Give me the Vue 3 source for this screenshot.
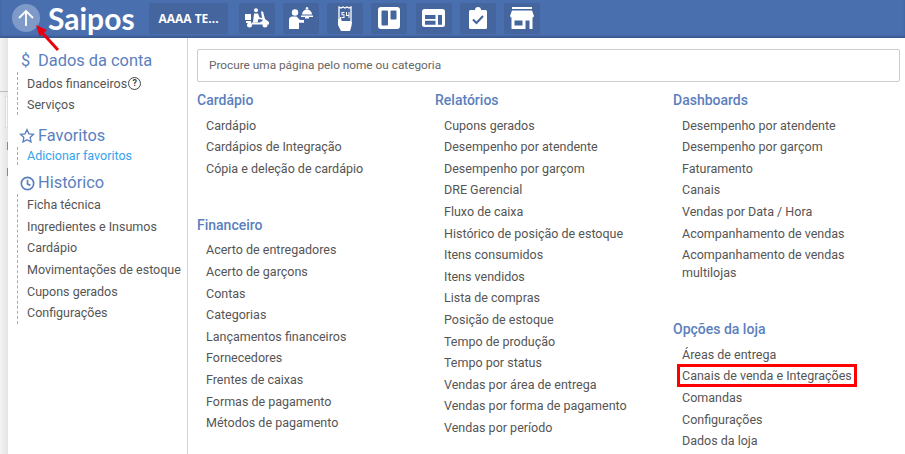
<script setup>
const columns = [
  [
    { title: 'Cardápio', items: ['Cardápio', 'Cardápios de Integração', 'Cópia e deleção de cardápio'] },
    { title: 'Financeiro', items: ['Acerto de entregadores', 'Acerto de garçons', 'Contas', 'Categorias', 'Lançamentos financeiros', 'Fornecedores', 'Frentes de caixas', 'Formas de pagamento', 'Métodos de pagamento'] },
  ],
  [
    { title: 'Relatórios', items: ['Cupons gerados', 'Desempenho por atendente', 'Desempenho por garçom', 'DRE Gerencial', 'Fluxo de caixa', 'Histórico de posição de estoque', 'Itens consumidos', 'Itens vendidos', 'Lista de compras', 'Posição de estoque', 'Tempo de produção', 'Tempo por status', 'Vendas por área de entrega', 'Vendas por forma de pagamento', 'Vendas por período'] },
  ],
  [
    { title: 'Dashboards', items: ['Desempenho por atendente', 'Desempenho por garçom', 'Faturamento', 'Canais', 'Vendas por Data / Hora', 'Acompanhamento de vendas', 'Acompanhamento de vendas multilojas'] },
    { title: 'Opções da loja', items: ['Áreas de entrega', 'Canais de venda e Integrações', 'Comandas', 'Configurações', 'Dados da loja'] },
  ],
]
const historico = ['Ficha técnica', 'Ingredientes e Insumos', 'Cardápio', 'Movimentações de estoque', 'Cupons gerados', 'Configurações']
</script>

<template>
  <div class="page">
    <header class="bar">
      <div class="up">
        <svg width="18" height="18" viewBox="0 0 18 18" fill="none" stroke="#fff" stroke-width="1.800"><path d="M9 17V2M2 9l7-7 7 7"/></svg>
      </div>
      <span class="logo">Saipos</span>
      <div class="store">AAAA TE...</div>
      <div class="tools">
        <div class="tool">
          <svg width="25" height="20" viewBox="0 0 25 20" fill="#fff"><circle cx="11" cy="2.300" r="2"/><path d="M9 5.500h4l1.500 4 2.500.5v1.500l-3.500-.5-1 3.500H8z"/><rect x="0" y="6" width="6" height="6"/><path d="M6.500 14.500h8l3-1.500-1.500-9.500h2L20 11l4 3v2.500H7z"/><rect x="1" y="13" width="5" height="2"/><circle cx="4.500" cy="17" r="2.500"/><circle cx="20" cy="17" r="2.500"/></svg>
        </div>
        <div class="tool">
          <svg width="25" height="24" viewBox="0 0 25 24" fill="#fff"><circle cx="6" cy="6.500" r="3.200"/><path d="M0 23v-9q0-3.500 3.500-3.500h4L11 14h4v2.800h-5V23z"/><path d="M13 8.500a5 5 0 0 1 10 0z"/><rect x="12" y="9.500" width="12" height="1.500"/><rect x="16" y="11" width="4" height="1.500"/><circle cx="18" cy="2.200" r="1.200"/></svg>
        </div>
        <div class="tool">
          <svg width="16" height="25" viewBox="0 0 16 25"><path d="M2 1l2 1 2-1 2 1 2-1 2 1 2-1v15H2z" fill="none" stroke="#fff" stroke-width="1.300"/><path d="M4.500 6h3v1H5.500v1.200h2V12h-3v-1h2V9.200h-2zM9 6h1v3h1.500V6h1v6h-1V10H9z" fill="#fff"/><path d="M1 13h2v-2h1l.5 4H13l2 1-.5 4-1.500 5H4l-3-6z" fill="#fff"/></svg>
        </div>
        <div class="tool">
          <svg width="22" height="22" viewBox="0 0 22 22"><rect width="22" height="22" rx="3" fill="#fff"/><rect x="3.500" y="3.500" width="6.500" height="15" rx="1" fill="#44659d"/><rect x="12.500" y="3.500" width="6" height="9" rx="1" fill="#44659d"/></svg>
        </div>
        <div class="tool">
          <svg width="23" height="18" viewBox="0 0 23 18"><rect width="23" height="18" rx="2.500" fill="#fff"/><path d="M3 6h10.500v4H3zM3 11.700h10.500v4H3zM16 6h4v9.700h-4z" fill="#44659d"/></svg>
        </div>
        <div class="tool">
          <svg width="18" height="22" viewBox="0 0 18 22"><path d="M1.500 3H6a3 3 0 0 1 6 0h4.500A1.500 1.500 0 0 1 18 4.500v16a1.500 1.500 0 0 1-1.500 1.500h-15A1.500 1.500 0 0 1 0 20.500v-16A1.500 1.500 0 0 1 1.500 3z" fill="#fff"/><path d="M4 12.500l3.500 3.500L14 9" fill="none" stroke="#44659d" stroke-width="2"/></svg>
        </div>
        <div class="tool">
          <svg width="24" height="22" viewBox="0 0 24 22" fill="#fff"><rect x="2" y="0" width="20" height="2"/><path d="M2 3.500h20L24 9a2.500 2.500 0 0 1-2.500 2h-19A2.500 2.500 0 0 1 0 9z"/><path fill-rule="evenodd" d="M1.500 11h21v11h-21zM4.500 13.500v5h8v-5zM15.500 13.500V22h4v-8.500z"/></svg>
        </div>
      </div>
    </header>
    <div class="body">
      <div class="behind">
        <div class="b-line"></div>
        <div class="b-card"></div>
        <div class="b-tick t1"></div>
        <div class="b-tick t2"></div>
      </div>
      <aside class="side">
        <h2 class="side-title"><span class="dollar">$</span>Dados da conta</h2>
        <ul class="side-list">
          <li class="first">Dados financeiros<span class="q">?</span></li>
          <li>Serviços</li>
        </ul>
        <h2 class="side-title second">
          <svg class="side-icon" width="16" height="16" viewBox="0 0 24 24" fill="none" stroke="#5b7fbd" stroke-width="2"><path d="M12 2.500l2.900 6.200 6.800.8-5 4.600 1.300 6.700L12 17.500l-6 3.300 1.300-6.700-5-4.600 6.800-.8z"/></svg>Favoritos
        </h2>
        <ul class="side-list">
          <li class="link">Adicionar favoritos</li>
        </ul>
        <h2 class="side-title third">
          <svg class="side-icon" width="15" height="15" viewBox="0 0 16 16" fill="none" stroke="#5b7fbd" stroke-width="1.800"><circle cx="8" cy="8" r="6.600"/><path d="M8 4v4.500l3 1.500"/></svg>Histórico
        </h2>
        <ul class="side-list">
          <li v-for="h in historico" :key="h">{{ h }}</li>
        </ul>
      </aside>
      <main class="main">
        <div class="search">Procure uma página pelo nome ou categoria</div>
        <div class="cols">
          <div v-for="(col, i) in columns" :key="i" class="col">
            <section v-for="g in col" :key="g.title" class="group">
              <h3>{{ g.title }}</h3>
              <ul>
                <li v-for="item in g.items" :key="item"><span :class="{ hl: item.startsWith('Canais de venda') }">{{ item }}</span></li>
              </ul>
            </section>
          </div>
        </div>
      </main>
    </div>
    <svg class="arrow" width="26" height="28" viewBox="0 0 26 28"><path d="M7 7.500L23 25" stroke="#e8000f" stroke-width="3"/><path d="M1 0l11 5-7.500 6.600z" fill="#e8000f"/></svg>
  </div>
</template>

<style scoped>
.page { position: relative; width: 905px; height: 454px; overflow: hidden; background: #fff; font-family: Roboto, "Liberation Sans", sans-serif; color: #555; }
ul { list-style: none; margin: 0; padding: 0; }
h2, h3 { margin: 0; font-weight: 400; }
.bar { height: 38px; background: #4a6fae; display: flex; align-items: center; padding: 0 0 2px 12px; box-sizing: border-box; box-shadow: inset 0 -2px 2px rgba(30,50,90,.35); position: relative; z-index: 1; }
.up { width: 28px; height: 28px; border-radius: 50%; background: #7e9ac8; display: flex; align-items: center; justify-content: center; }
.logo { color: #fff; font: 700 30px/34px Lato, sans-serif; margin-left: 8px; width: 101px; }
.store { width: 79px; height: 31px; background: #44659d; color: #fff; border-radius: 2px; font: 700 12px/31px "Open Sans", sans-serif; text-align: center; }
.tools { display: flex; gap: 8.170px; margin-left: 11px; }
.tool { width: 36px; height: 31px; background: #44659d; border-radius: 2px; display: flex; align-items: center; justify-content: center; }
.body { display: flex; height: 416px; }
.behind { width: 8px; flex: none; position: relative; background: linear-gradient(to right, #f4f4f4, #e4e4e4); }
.b-line { position: absolute; left: 0; top: 53px; width: 8px; height: 1px; background: #bbb; }
.b-card { position: absolute; left: 5px; top: 58px; width: 3px; height: 32px; background: #f8f8f8; border: 1px solid #ddd; box-sizing: border-box; }
.b-tick { position: absolute; left: 7px; width: 1px; height: 8px; background: #888; }
.t1 { top: 104px; }
.t2 { top: 130px; }
.side { width: 170px; background: #fff; border-right: 1px solid #d5d5d5; padding: 12px 0 0 9px; }
.side-title { font-size: 16.400px; line-height: 22px; color: #5b7fbd; display: flex; align-items: center; }
.second { margin-top: 10px; }
.third { margin-top: 7px; }
.dollar { width: 21px; padding-left: 4px; box-sizing: border-box; }
.side-icon { margin-right: 3px; margin-left: 2px; flex: none; }
.third .side-icon { margin-left: 3px; margin-right: 3px; }
.side-list { border-left: 1px dashed #aaa; padding-left: 9px; }
.side-list li { font-size: 12.500px; line-height: 21.600px; white-space: nowrap; display: flex; align-items: center; }
.side-list .first { padding-top: 1px; margin-bottom: -1px; }
.side-list .link { color: #35a3ee; line-height: 18px; }
.q { width: 11px; height: 11px; border: 1px solid #444; border-radius: 50%; font-size: 9px; line-height: 11px; text-align: center; margin-left: 1px; font-weight: 700; color: #444; }
.main { flex: 1; background: #fff; padding: 11px 5px 0 9px; min-width: 0; }
.search { height: 31px; border: 1px solid #ccc; border-radius: 2px; padding-left: 11px; font-size: 11.800px; line-height: 31px; color: #666; }
.cols { display: flex; margin-top: 7px; }
.col { width: 238px; flex: none; }
.group { margin-bottom: 32.200px; }
.group h3 { font-size: 14px; line-height: 22px; color: #5b7fbd; font-weight: 500; }
.group ul { margin-top: 5.700px; padding-left: 9px; }
.group li { font-size: 12.500px; line-height: 18px; padding-bottom: 3.600px; width: 190px; }
.hl { outline: 3px solid #f00; outline-offset: 2px; display: inline-block; line-height: 13px; white-space: nowrap; }
.arrow { position: absolute; left: 35px; top: 25px; z-index: 2; }
</style>
